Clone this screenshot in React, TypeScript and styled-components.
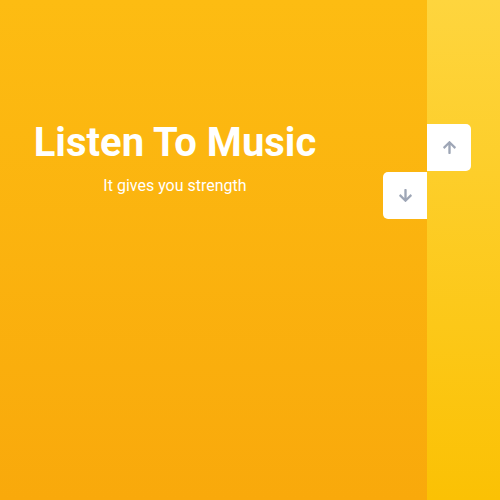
import { createGlobalStyle } from 'styled-components';
import styled from 'styled-components';
import { FaArrowUp, FaArrowDown } from 'react-icons/fa';

const GlobalStyle = createGlobalStyle`
    * {
        box-sizing: border-box;
    }
    body {
        margin: 0;
        font-family: Roboto, 'Liberation Sans', sans-serif;
        overflow: hidden;
    }
`;

const SliderContainer = styled.div`
    position: relative;
    width: 500px;
    height: 500px;
    display: flex;
    overflow: hidden;
`;

const LeftSlide = styled.div`
    width: 427px;
    height: 100%;
    background: linear-gradient(180deg, #fdbc12 0%, #f9a90b 100%);
    display: flex;
    flex-direction: column;
    align-items: center;
    padding-top: 119px;
    padding-right: 77px;
    color: #fff;
`;

const RightSlide = styled.div`
    flex: 1;
    height: 100%;
    background: linear-gradient(180deg, #fed53e 0%, #fbc104 100%);
`;

const Title = styled.h1`
    margin: 0;
    font-size: 40px;
    line-height: 48px;
    font-weight: 700;
    white-space: nowrap;
`;

const Subtitle = styled.p`
    margin: 9px 0 0;
    font-size: 16px;
    line-height: 19px;
    font-weight: 400;
`;

const ActionButtons = styled.div`
    position: absolute;
    left: 383px;
    top: 124px;
    width: 88px;
    height: 95px;
`;

const ArrowButton = styled.button<{ $dir: 'up' | 'down' }>`
    position: absolute;
    width: 44px;
    height: 47px;
    border: none;
    padding: 0;
    background: #fff;
    color: #9ea6b6;
    display: flex;
    align-items: center;
    justify-content: center;
    cursor: pointer;
    ${({ $dir }) =>
        $dir === 'up'
            ? 'left: 44px; top: 0; border-radius: 0 5px 5px 0;'
            : 'left: 0; top: 48px; border-radius: 5px 0 0 5px;'}
`;

export default function App() {
    return (
        <SliderContainer>
            <GlobalStyle />
            <LeftSlide>
                <Title>Listen To Music</Title>
                <Subtitle>It gives you strength</Subtitle>
            </LeftSlide>
            <RightSlide />
            <ActionButtons>
                <ArrowButton $dir="down">
                    <FaArrowDown size={15} />
                </ArrowButton>
                <ArrowButton $dir="up">
                    <FaArrowUp size={15} />
                </ArrowButton>
            </ActionButtons>
        </SliderContainer>
    );
}
